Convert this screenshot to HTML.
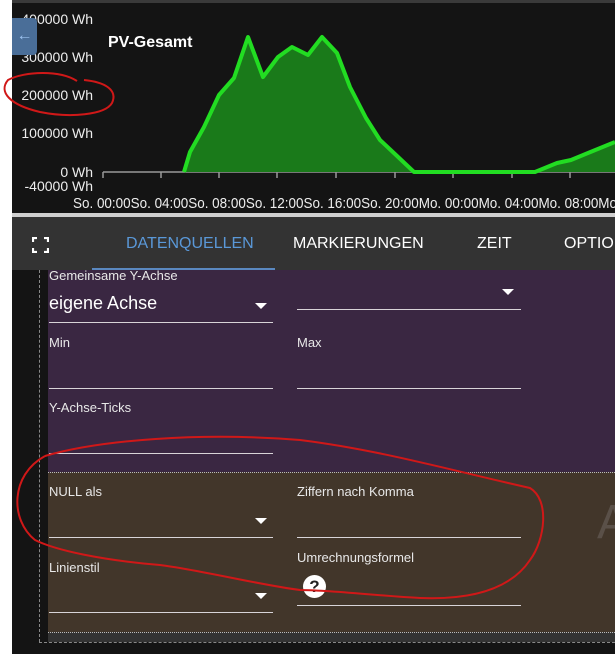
<!DOCTYPE html>
<html><head><meta charset="utf-8"><style>
*{margin:0;padding:0;box-sizing:border-box}
body{width:615px;height:654px;background:#fff;position:relative;overflow:hidden;font-family:"Liberation Sans",sans-serif}
.abs{position:absolute}
.lbl{position:absolute;color:#e8e8e8;font-size:13px}
.line{position:absolute;height:1px;background:#d8d4d8}
.arr{position:absolute;width:0;height:0;border-left:6px solid transparent;border-right:6px solid transparent;border-top:6px solid #fff}
</style></head><body>
<div class="abs" style="left:12px;top:0;width:603px;height:654px;background:#141414"></div>
<div class="abs" style="left:12px;top:0;width:603px;height:3px;background:#3a3a3a"></div>
<svg class="abs" style="left:0;top:0" width="615" height="213">
<g font-family="Liberation Sans" font-size="14" fill="#eee" text-anchor="end">
<text x="93" y="24">400000 Wh</text>
<text x="93" y="62">300000 Wh</text>
<text x="93" y="100">200000 Wh</text>
<text x="93" y="138">100000 Wh</text>
<text x="93" y="177">0 Wh</text>
<text x="93" y="191">-40000 Wh</text>
</g>
<text x="108" y="47" font-family="Liberation Sans" font-size="16" font-weight="bold" fill="#fff">PV-Gesamt</text>
<line x1="103" y1="172" x2="615" y2="172" stroke="#999" stroke-width="1.5"/>
<g stroke="#999" stroke-width="1.5">
<line x1="103" y1="172" x2="103" y2="178"/><line x1="161" y1="172" x2="161" y2="178"/><line x1="219" y1="172" x2="219" y2="178"/><line x1="277" y1="172" x2="277" y2="178"/><line x1="336" y1="172" x2="336" y2="178"/><line x1="395" y1="172" x2="395" y2="178"/><line x1="453" y1="172" x2="453" y2="178"/><line x1="512" y1="172" x2="512" y2="178"/><line x1="570" y1="172" x2="570" y2="178"/>
</g>
<path d="M184,172 L190,152 L204,127 L219,95 L234,78 L248,37 L263,77 L278,57 L292,47 L308,55 L322,37 L337,53 L350,87 L366,118 L380,140 L396,155 L414,172 L535,172 L557,163 L571,160 L588,153 L615,142 L615,172 Z" fill="#1a7a1a"/>
<path d="M184,172 L190,152 L204,127 L219,95 L234,78 L248,37 L263,77 L278,57 L292,47 L308,55 L322,37 L337,53 L350,87 L366,118 L380,140 L396,155 L414,172 L535,172 L557,163 L571,160 L588,153 L615,142" fill="none" stroke="#22dd22" stroke-width="4" stroke-linejoin="round"/>
<text x="73" y="208" font-family="Liberation Sans" font-size="15" fill="#eee" textLength="544" lengthAdjust="spacingAndGlyphs">So. 00:00So. 04:00So. 08:00So. 12:00So. 16:00So. 20:00Mo. 00:00Mo. 04:00Mo. 08:00Mo</text>
</svg>
<div class="abs" style="left:12px;top:18px;width:25px;height:37px;background:#4a6e98;border-radius:0 4px 4px 0;color:#9cc2f0;font-size:16px;text-align:center;line-height:35px">←</div>
<div class="abs" style="left:12px;top:213px;width:603px;height:4px;background:#cfcfcf"></div>
<div class="abs" style="left:12px;top:217px;width:603px;height:53px;background:#333"></div>
<svg class="abs" style="left:32px;top:237px" width="17" height="16"><path d="M1,5V1H5M12,1H16V5M16,11V15H12M5,15H1V11" fill="none" stroke="#fff" stroke-width="2.2"/></svg>
<div class="abs" style="left:126px;top:235px;color:#5a98d8;font-size:16px">DATENQUELLEN</div>
<div class="abs" style="left:92px;top:268px;width:183px;height:2px;background:#5a88c0"></div>
<div class="abs" style="left:293px;top:235px;color:#fff;font-size:16px">MARKIERUNGEN</div>
<div class="abs" style="left:477px;top:235px;color:#fff;font-size:16px">ZEIT</div>
<div class="abs" style="left:564px;top:235px;color:#fff;font-size:16px">OPTIO</div>
<div class="abs" style="left:39px;top:270px;width:0;height:372px;border-left:1px dashed #888"></div>
<div class="abs" style="left:48px;top:270px;width:567px;height:202px;background:#3a2742"></div>
<div class="abs" style="left:48px;top:472px;width:567px;height:160px;background:#42362a;border-top:1px dotted #bbb"></div>
<div class="abs" style="left:48px;top:632px;width:567px;height:10px;background:#333;border-top:1px dotted #bbb"></div>
<div class="abs" style="left:39px;top:642px;width:576px;border-top:1px dashed #888"></div>
<div class="lbl" style="left:49px;top:268px">Gemeinsame Y-Achse</div>
<div class="abs" style="left:49px;top:293px;color:#fff;font-size:18px">eigene Achse</div>
<div class="arr" style="left:255px;top:303px"></div><div class="line" style="left:49px;top:322px;width:224px"></div>
<div class="arr" style="left:502px;top:289px"></div><div class="line" style="left:297px;top:309px;width:224px"></div>
<div class="lbl" style="left:49px;top:335px">Min</div><div class="line" style="left:49px;top:388px;width:224px"></div>
<div class="lbl" style="left:297px;top:335px">Max</div><div class="line" style="left:297px;top:388px;width:224px"></div>
<div class="lbl" style="left:49px;top:400px">Y-Achse-Ticks</div><div class="line" style="left:49px;top:453px;width:224px"></div>
<div class="lbl" style="left:49px;top:484px">NULL als</div>
<div class="arr" style="left:255px;top:518px"></div><div class="line" style="left:49px;top:537px;width:224px"></div>
<div class="lbl" style="left:297px;top:484px">Ziffern nach Komma</div><div class="line" style="left:297px;top:537px;width:224px"></div>
<div class="lbl" style="left:49px;top:560px">Linienstil</div>
<div class="arr" style="left:255px;top:593px"></div><div class="line" style="left:49px;top:612px;width:224px"></div>
<div class="lbl" style="left:297px;top:550px">Umrechnungsformel</div><div class="line" style="left:297px;top:605px;width:224px"></div>
<div class="abs" style="left:303px;top:575px;width:23px;height:23px;border-radius:50%;background:#fff;color:#222;font-weight:bold;font-size:17px;text-align:center;line-height:23px">?</div>
<div class="abs" style="left:597px;top:495px;color:#5a5048;font-size:48px">A</div>
<svg class="abs" style="left:0;top:0" width="615" height="654">
<path d="M77,81 C60,70 25,71 8,80 C-2,92 10,105 40,112 C70,118 105,115 112,103 C118,90 105,82 84,80" fill="none" stroke="#d01818" stroke-width="2"/>
<path d="M45,456 C100,440 200,432 300,440 C380,450 450,470 530,488 C550,500 545,540 530,560 C510,590 470,600 420,598 C380,596 330,590 300,590 C260,585 200,570 160,565 C100,560 55,550 35,540 C10,520 10,475 45,456" fill="none" stroke="#d01818" stroke-width="2"/>
</svg>
</body></html>
